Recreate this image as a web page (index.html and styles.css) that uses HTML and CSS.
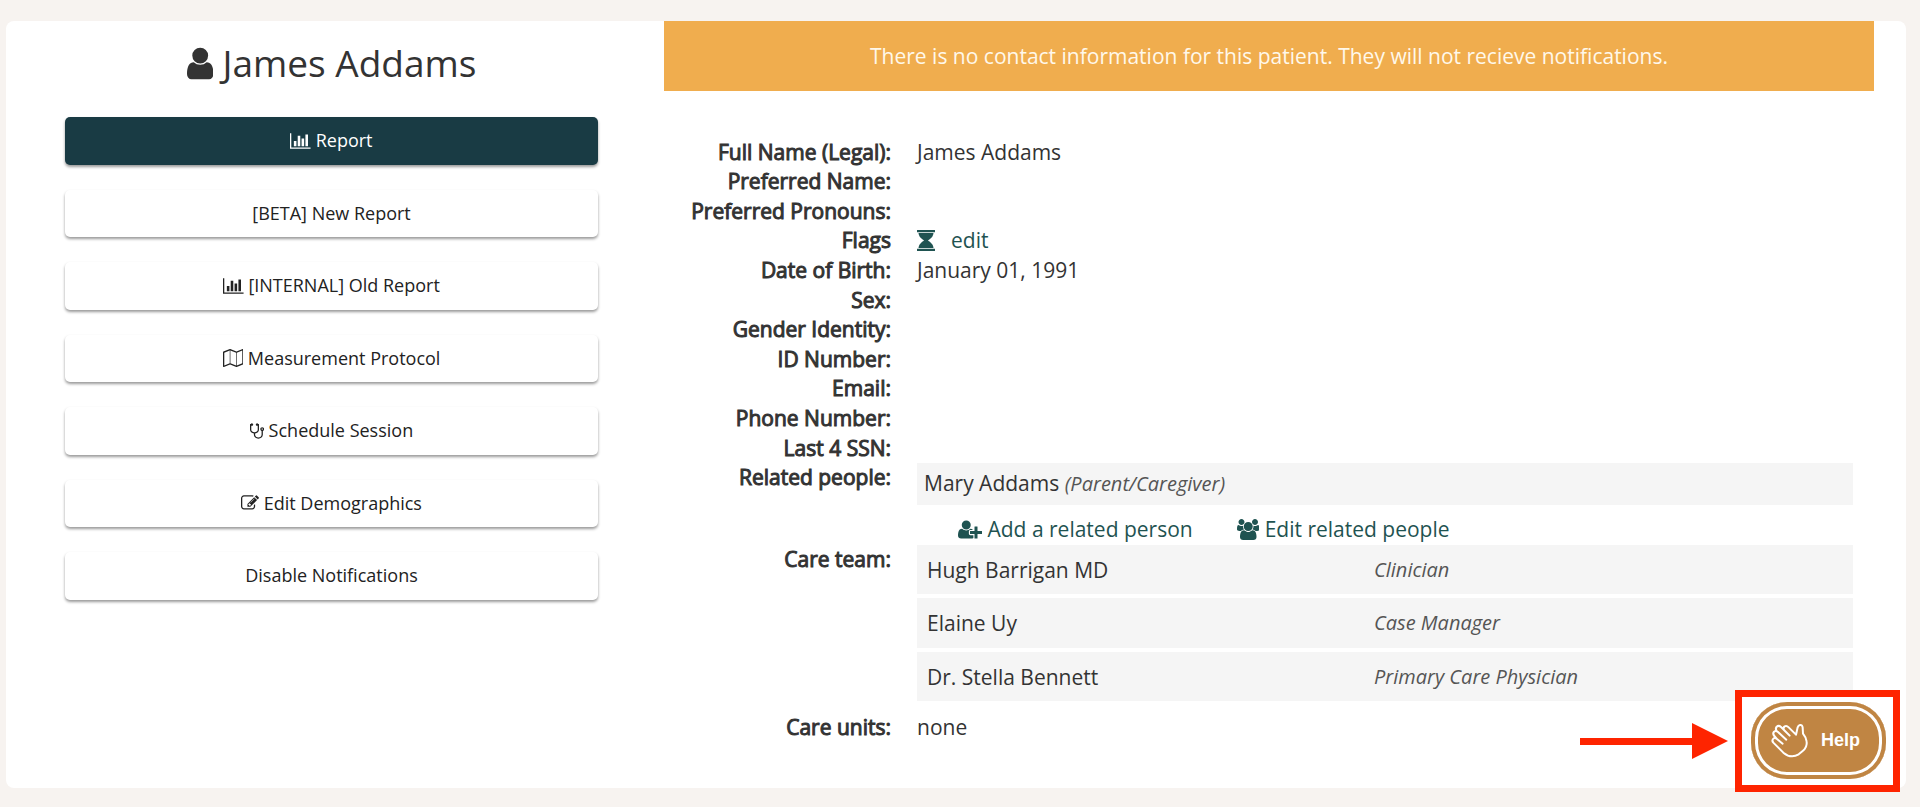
FILE: index.html
```html
<!DOCTYPE html>
<html lang="en">
<head>
<meta charset="utf-8">
<title>James Addams</title>
<link rel="stylesheet" href="styles.css">
</head>
<body>
<main class="card">
  <aside class="sidebar">
    <h1 class="patient-name"><svg class="icon" viewBox="0 0 1280 1792" aria-hidden="true"><path transform="matrix(1 0 0 -1 0 1536)" d="M1280 137q0 -109 -62.5 -187t-150.5 -78h-854q-88 0 -150.5 78t-62.5 187q0 85 8.5 160.5t31.5 152t58.5 131t94 89t134.5 34.5q131 -128 313 -128t313 128q76 0 134.5 -34.5t94 -89t58.5 -131t31.5 -152t8.5 -160.5zM1024 1024q0 -159 -112.5 -271.5t-271.5 -112.5t-271.5 112.5t-112.5 271.5t112.5 271.5t271.5 112.5t271.5 -112.5t112.5 -271.5z"/></svg> James Addams</h1>
    <nav class="actions" aria-label="Patient actions">
      <button type="button" class="btn btn-primary"><svg class="icon" viewBox="0 0 2048 1792" aria-hidden="true"><path transform="matrix(1 0 0 -1 0 1536)" d="M640 640v-512h-256v512h256zM1024 1152v-1024h-256v1024h256zM2048 0v-128h-2048v1536h128v-1408h1920zM1408 896v-768h-256v768h256zM1792 1280v-1152h-256v1152h256z"/></svg> Report</button>
      <button type="button" class="btn">[BETA] New Report</button>
      <button type="button" class="btn"><svg class="icon" viewBox="0 0 2048 1792" aria-hidden="true"><path transform="matrix(1 0 0 -1 0 1536)" d="M640 640v-512h-256v512h256zM1024 1152v-1024h-256v1024h256zM2048 0v-128h-2048v1536h128v-1408h1920zM1408 896v-768h-256v768h256zM1792 1280v-1152h-256v1152h256z"/></svg> [INTERNAL] Old Report</button>
      <button type="button" class="btn"><svg class="icon" viewBox="0 0 2048 1792" aria-hidden="true"><path fill-rule="evenodd" transform="matrix(1 0 0 -1 0 1536)" d="M2020 1525q28 -20 28 -53v-1408q0 -20 -11 -36t-29 -23l-640 -256q-24 -11 -48 0l-616 246l-616 -246q-10 -5 -24 -5q-19 0 -36 11q-28 20 -28 53v1408q0 20 11 36t29 23l640 256q24 11 48 0l616 -246l616 246q32 13 60 -6zM736 1390v-1270l576 -230v1270zM128 1173v-1270l544 217v1270zM1920 107v1270l-544 -217v-1270z"/></svg> Measurement Protocol</button>
      <button type="button" class="btn"><svg class="icon" viewBox="0 0 1408 1792" aria-hidden="true"><path transform="matrix(1 0 0 -1 0 1536)" d="M1280 832q0 26 -19 45t-45 19t-45 -19t-19 -45t19 -45t45 -19t45 19t19 45zM1408 832q0 -62 -35.5 -111t-92.5 -70v-395q0 -159 -131.5 -271.5t-316.5 -112.5t-316.5 112.5t-131.5 271.5v132q-164 20 -274 128t-110 252v512q0 26 19 45t45 19q6 0 16 -2q17 30 47 48t65 18q53 0 90.5 -37.5t37.5 -90.5t-37.5 -90.5t-90.5 -37.5q-33 0 -64 18v-402q0 -106 94 -181t226 -75t226 75t94 181v402q-31 -18 -64 -18q-53 0 -90.5 37.5t-37.5 90.5t37.5 90.5t90.5 37.5q35 0 65 -18t47 -48q10 2 16 2q26 0 45 -19t19 -45v-512q0 -144 -110 -252t-274 -128v-132q0 -106 94 -181t226 -75t226 75t94 181v395q-57 21 -92.5 70t-35.5 111q0 80 56 136t136 56t136 -56t56 -136z"/></svg> Schedule Session</button>
      <button type="button" class="btn"><svg class="icon" viewBox="0 0 1792 1792" aria-hidden="true"><path fill-rule="evenodd" transform="matrix(1 0 0 -1 0 1536)" d="M888 352l116 116l-152 152l-116 -116v-56h96v-96h56zM1328 1072q-16 16 -33 -1l-350 -350q-17 -17 -1 -33t33 1l350 350q17 17 1 33zM1408 478v-190q0 -119 -84.5 -203.5t-203.5 -84.5h-832q-119 0 -203.5 84.5t-84.5 203.5v832q0 119 84.5 203.5t203.5 84.5h832q63 0 117 -25q15 -7 18 -23q3 -17 -9 -29l-49 -49q-14 -14 -32 -8q-23 6 -45 6h-832q-66 0 -113 -47t-47 -113v-832q0 -66 47 -113t113 -47h832q66 0 113 47t47 113v126q0 13 9 22l64 64q15 15 35 7t20 -29zM1312 1216l288 -288l-672 -672h-288v288zM1756 1084l-92 -92l-288 288l92 92q28 28 68 28t68 -28l152 -152q28 -28 28 -68t-28 -68z"/></svg> Edit Demographics</button>
      <button type="button" class="btn">Disable Notifications</button>
    </nav>
  </aside>

  <section class="content">
    <p class="banner" role="alert">There is no contact information for this patient. They will not recieve notifications.</p>
    <dl class="details">
      <dt>Full Name (Legal):</dt><dd>James Addams</dd>
      <dt>Preferred Name:</dt><dd></dd>
      <dt>Preferred Pronouns:</dt><dd></dd>
      <dt>Flags</dt>
      <dd class="flags"><svg class="icon" viewBox="0 0 1536 1792" aria-hidden="true"><path transform="matrix(1 0 0 -1 0 1536)" d="M1504 -64q14 0 23 -9t9 -23v-128q0 -14 -9 -23t-23 -9h-1472q-14 0 -23 9t-9 23v128q0 14 9 23t23 9h1472zM130 0q3 55 16 107t30 95t46 87t53.5 76t64.5 69.5t66 60t70.5 55t66.5 47.5t65 43q-43 28 -65 43t-66.5 47.5t-70.5 55t-66 60t-64.5 69.5t-53.5 76t-46 87t-30 95t-16 107h1276q-3 -55 -16 -107t-30 -95t-46 -87t-53.5 -76t-64.5 -69.5t-66 -60t-70.5 -55t-66.5 -47.5t-65 -43q43 -28 65 -43t66.5 -47.5t70.5 -55t66 -60t64.5 -69.5t53.5 -76t46 -87t30 -95t16 -107h-1276zM1504 1536q14 0 23 -9t9 -23v-128q0 -14 -9 -23t-23 -9h-1472q-14 0 -23 9t-9 23v128q0 14 9 23t23 9h1472z"/></svg><a class="link" href="#flags">edit</a></dd>
      <dt>Date of Birth:</dt><dd>January 01, 1991</dd>
      <dt>Sex:</dt><dd></dd>
      <dt>Gender Identity:</dt><dd></dd>
      <dt>ID Number:</dt><dd></dd>
      <dt>Email:</dt><dd></dd>
      <dt>Phone Number:</dt><dd></dd>
      <dt>Last 4 SSN:</dt><dd></dd>
      <dt>Related people:</dt>
      <dd>
        <div class="related">Mary Addams <em class="role">(Parent/Caregiver)</em></div>
        <div class="related-links">
          <a class="link" href="#add"><svg class="icon" viewBox="0 0 2048 1792" aria-hidden="true"><path transform="matrix(1 0 0 -1 0 1536)" d="M704 640q-159 0 -271.5 112.5t-112.5 271.5t112.5 271.5t271.5 112.5t271.5 -112.5t112.5 -271.5t-112.5 -271.5t-271.5 -112.5zM1664 512h352q13 0 22.5 -9.5t9.5 -22.5v-192q0 -13 -9.5 -22.5t-22.5 -9.5h-352v-352q0 -13 -9.5 -22.5t-22.5 -9.5h-192q-13 0 -22.5 9.5t-9.5 22.5v352h-352q-13 0 -22.5 9.5t-9.5 22.5v192q0 13 9.5 22.5t22.5 9.5h352v352q0 13 9.5 22.5t22.5 9.5h192q13 0 22.5 -9.5t9.5 -22.5v-352zM928 288q0 -52 38 -90t90 -38h256v-238q-68 -50 -171 -50h-874q-121 0 -194 69t-73 190q0 53 3.5 103.5t14 109t26.5 108.5t43 97.5t62 81t85.5 53.5t111.5 20q19 0 39 -17q79 -61 154.5 -91.5t164.5 -30.5t164.5 30.5t154.5 91.5q20 17 39 17q132 0 217 -96h-223q-52 0 -90 -38t-38 -90v-192z"/></svg> Add a related person</a>
          <a class="link" href="#people"><svg class="icon" viewBox="0 0 1920 1792" aria-hidden="true"><path transform="matrix(1 0 0 -1 0 1536)" d="M593 640q-162 -5 -265 -128h-134q-82 0 -138 40.5t-56 118.5q0 353 124 353q6 0 43.5 -21t97.5 -42.5t119 -21.5q67 0 133 23q-5 -37 -5 -66q0 -139 81 -256zM1664 3q0 -120 -73 -189.5t-194 -69.5h-874q-121 0 -194 69.5t-73 189.5q0 53 3.5 103.5t14 109t26.5 108.5t43 97.5t62 81t85.5 53.5t111.5 20q10 0 43 -21.5t73 -48t107 -48t135 -21.5t135 21.5t107 48t73 48t43 21.5q61 0 111.5 -20t85.5 -53.5t62 -81t43 -97.5t26.5 -108.5t14 -109t3.5 -103.5zM640 1280q0 -106 -75 -181t-181 -75t-181 75t-75 181t75 181t181 75t181 -75t75 -181zM1344 896q0 -159 -112.5 -271.5t-271.5 -112.5t-271.5 112.5t-112.5 271.5t112.5 271.5t271.5 112.5t271.5 -112.5t112.5 -271.5zM1920 671q0 -78 -56 -118.5t-138 -40.5h-134q-103 123 -265 128q81 117 81 256q0 29 -5 66q66 -23 133 -23q59 0 119 21.5t97.5 42.5t43.5 21q124 0 124 -353zM1792 1280q0 -106 -75 -181t-181 -75t-181 75t-75 181t75 181t181 75t181 -75t75 -181z"/></svg> Edit related people</a>
        </div>
      </dd>
      <dt>Care team:</dt>
      <dd class="team">
        <div class="member"><span>Hugh Barrigan MD</span><em class="role">Clinician</em></div>
        <div class="member"><span>Elaine Uy</span><em class="role">Case Manager</em></div>
        <div class="member"><span>Dr. Stella Bennett</span><em class="role">Primary Care Physician</em></div>
      </dd>
      <dt class="units">Care units:</dt><dd class="units">none</dd>
    </dl>
  </section>
</main>

<div class="callout">
  <svg class="arrow" viewBox="0 0 148 36" aria-hidden="true"><path d="M0 15H112V0L148 18L112 36V22H0Z"/></svg>
  <div class="frame">
    <button type="button" class="help"><svg class="hand" viewBox="12 12 120 120" aria-hidden="true"><path d="M50 80L32 65Q25 60 21 66Q17 71 22 77L52 107Q75 126 98 112L110 102Q124 91 122 74Q121 62 111 50L110 32Q109 23 102 24Q97 25 95 31L90 53L68 31Q62 25 56 28Q50 32 54 39L71 56M32 65L25 57Q19 50 24 44Q29 40 36 45L61 68M36 45L32 42Q27 36 32 29Q38 24 45 30L71 56"/></svg>Help</button>
  </div>
</div>
</body>
</html>
```
FILE: styles.css
```css
* {
  box-sizing: border-box;
}

body {
  margin: 0;
  padding: 21px 14px 18px 6px;
  background: #f7f3f0;
  color: #333;
  font-family: "Open Sans", "Noto Sans", sans-serif;
  font-size: 21px;
  line-height: 1.41;
}

.card {
  display: grid;
  grid-template-columns: 533fr 1210fr;
  column-gap: 66px;
  padding: 0 32px 45px 59px;
  background: #fff;
  border-radius: 8px;
}

.icon {
  height: 1em;
  width: auto;
  fill: currentColor;
  vertical-align: -0.14em;
}

.patient-name {
  margin: 16px 0 28px;
  font-size: 37px;
  font-weight: 400;
  line-height: 52px;
  text-align: center;
}

.actions {
  display: flex;
  flex-direction: column;
  gap: 25px;
}

.btn {
  padding: 11px 16px;
  border: 0;
  border-radius: 5px;
  background: #fff;
  color: #222;
  box-shadow: 0 2px 3px rgba(0, 0, 0, 0.4);
  font-family: inherit;
  font-size: 18px;
  line-height: 1.42;
  cursor: pointer;
}

.btn-primary {
  background: #193b44;
  color: #fff;
}

.banner {
  margin: 0;
  padding: 21px 20px 19px;
  background: #f0ad4e;
  color: #fff8ea;
  text-align: center;
}

.details {
  display: grid;
  grid-template-columns: 227px 1fr;
  column-gap: 26px;
  margin: 47px 21px 0 0;
}

.details dt {
  text-align: right;
  -webkit-text-stroke: 1px currentColor;
}

.details dd {
  margin: 0;
}

.flags {
  color: #1f5351;
}

.flags .link {
  margin-left: 16px;
}

.link {
  color: #1f5351;
  text-decoration: none;
}

.role {
  color: #555;
  font-size: 20px;
  line-height: 1.4;
}

.related {
  padding: 6px 7px;
  background: #f5f5f5;
}

.related-links {
  display: flex;
  gap: 44px;
  padding: 10px 0 0 41px;
}

.team {
  display: flex;
  flex-direction: column;
  gap: 4px;
}

.member {
  display: grid;
  grid-template-columns: 447fr 479fr;
  padding: 11px 0 9px 10px;
  background: #f5f5f5;
}

.units {
  padding-top: 12px;
}

.callout {
  position: fixed;
  right: 20px;
  bottom: 15px;
  display: flex;
  align-items: center;
  gap: 7px;
}

.arrow {
  width: 148px;
  height: 36px;
  fill: #fe2400;
}

.frame {
  padding: 5px 7px 6px 9px;
  border: 7px solid #fe2400;
  background: #fff;
}

.help {
  display: flex;
  align-items: center;
  gap: 11px;
  width: 135px;
  height: 77px;
  padding: 0 0 0 19px;
  border: 0;
  border-radius: 36px;
  background: #c08543;
  box-shadow: inset 0 0 0 4px #c08543, inset 0 0 0 7px #fff;
  color: #fff;
  font-family: "Liberation Sans", Arial, sans-serif;
  font-size: 18px;
  font-weight: 700;
  cursor: pointer;
}

.hand {
  width: 40px;
  height: 40px;
  fill: none;
  stroke: #fff;
  stroke-width: 6;
  stroke-linecap: round;
  stroke-linejoin: round;
}
```
